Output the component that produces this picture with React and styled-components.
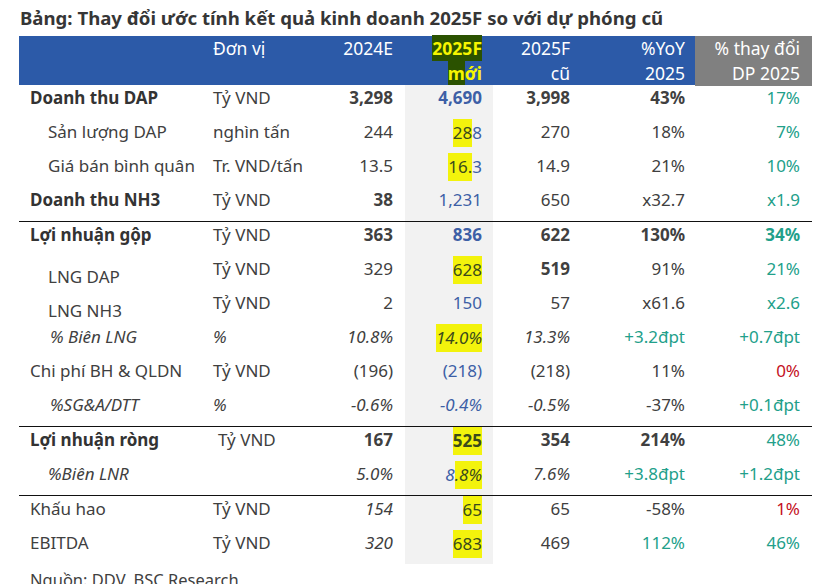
import styled, { createGlobalStyle } from "styled-components";

const GlobalStyle = createGlobalStyle`
    html, body {
        margin: 0;
        padding: 0;
        background: #ffffff;
    }
    body {
        font-family: "Noto Sans", "Open Sans", sans-serif;
        color: #404040;
        overflow: hidden;
    }
`;

const Page = styled.div`
    width: 815px;
    height: 584px;
    padding: 5px 0 0 19px;
    box-sizing: border-box;
`;

const Title = styled.h1`
    margin: 0 0 0 1px;
    font-size: 18.6px;
    line-height: 26px;
    font-weight: 700;
    color: #363636;
    height: 31px;
    white-space: nowrap;
`;

const COLS = "192px 109px 85px 88px 89px 113px 117px";

const HeaderRow = styled.div`
    display: grid;
    grid-template-columns: ${COLS};
    width: 793px;
    height: 49px;
    background: #2c5aa8;
    color: #ffffff;
    font-size: 17.5px;
    line-height: 25px;
`;

const HeadCell = styled.div`
    text-align: ${(p) => (p.$left ? "left" : "right")};
    padding-right: ${(p) => p.$pr ?? 0}px;
    padding-left: ${(p) => p.$pl ?? 0}px;
    background: ${(p) => (p.$gray ? "#808080" : "transparent")};
    white-space: nowrap;
`;

const HeadMark = styled.span`
    background: #2b5200;
    color: #f6f600;
    font-weight: 700;
    padding: 1px 0;
`;

const HeadYellow = styled.span`
    color: #f6f600;
    font-weight: 700;
`;

const Body = styled.div`
    width: 793px;
`;

const Group = styled.div`
    border-top: ${(p) => (p.$first ? "none" : "1px solid #111111")};
`;

const Row = styled.div`
    display: grid;
    grid-template-columns: ${COLS};
    height: 34px;
    font-size: 17px;
    line-height: 26px;
`;

const Cell = styled.div`
    white-space: nowrap;
    text-align: ${(p) => (p.$left ? "left" : "right")};
    padding-left: ${(p) => p.$pl ?? 0}px;
    padding-right: ${(p) => p.$pr ?? 0}px;
    padding-top: ${(p) => p.$down ?? 0}px;
    font-weight: ${(p) => (p.$bold ? 700 : 400)};
    font-style: ${(p) => (p.$italic ? "italic" : "normal")};
    color: ${(p) => p.$color || "#404040"};
    background: ${(p) => (p.$gray ? "#f2f2f2" : "transparent")};
    box-sizing: border-box;
`;

const Mark = styled.span`
    display: inline-block;
    background: #f3f30c;
    color: #3a4a1c;
    padding: 2px 0 3px;
    line-height: 23px;
`;

const Source = styled.div`
    margin: 5px 0 0 11px;
    font-size: 16.5px;
    line-height: 22px;
    color: #404040;
`;

const BLUE = "#3d5fa6";
const GREEN = "#22a08a";
const RED = "#c4101e";

// a value is a string, or { v, b, i, c, mark, before }: mark is the highlighted part
const groups = [
    [
        { label: "Doanh thu DAP", b: true, unit: "Tỷ VND", vals: [{ v: "3,298", b: true }, { v: "4,690", b: true }, { v: "3,998", b: true }, { v: "43%", b: true }, { v: "17%", c: GREEN }] },
        { label: "Sản lượng DAP", indent: 18, unit: "nghìn tấn", vals: ["244", { v: "8", mark: "28", before: true }, "270", "18%", { v: "7%", c: GREEN }] },
        { label: "Giá bán bình quân", indent: 18, unit: "Tr. VND/tấn", vals: ["13.5", { v: "3", mark: "16.", before: true }, "14.9", "21%", { v: "10%", c: GREEN }] },
        { label: "Doanh thu NH3", b: true, unit: "Tỷ VND", vals: [{ v: "38", b: true }, "1,231", "650", "x32.7", { v: "x1.9", c: GREEN }] },
    ],
    [
        { label: "Lợi nhuận gộp", b: true, unit: "Tỷ VND", vals: [{ v: "363", b: true }, { v: "836", b: true }, { v: "622", b: true }, { v: "130%", b: true }, { v: "34%", b: true, c: GREEN }] },
        { label: "LNG DAP", indent: 18, down: 8, unit: "Tỷ VND", vals: ["329", { mark: "628" }, { v: "519", b: true }, "91%", { v: "21%", c: GREEN }] },
        { label: "LNG NH3", indent: 18, down: 8, unit: "Tỷ VND", vals: ["2", "150", "57", "x61.6", { v: "x2.6", c: GREEN }] },
        { label: "% Biên LNG", indent: 20, i: true, unit: "%", vals: [{ v: "10.8%", i: true }, { mark: "14.0%", i: true }, { v: "13.3%", i: true }, { v: "+3.2đpt", c: GREEN }, { v: "+0.7đpt", c: GREEN }] },
        { label: "Chi phí BH & QLDN", unit: "Tỷ VND", vals: ["(196)", "(218)", "(218)", "11%", { v: "0%", c: RED }] },
        { label: "%SG&A/DTT", indent: 20, i: true, unit: "%", vals: [{ v: "-0.6%", i: true }, { v: "-0.4%", i: true }, { v: "-0.5%", i: true }, "-37%", { v: "+0.1đpt", c: GREEN }] },
    ],
    [
        { label: "Lợi nhuận ròng", b: true, unit: "Tỷ VND", unitShift: 5, vals: [{ v: "167", b: true }, { mark: "525", b: true }, { v: "354", b: true }, { v: "214%", b: true }, { v: "48%", c: GREEN }] },
        { label: "%Biên LNR", indent: 18, i: true, unit: "", vals: [{ v: "5.0%", i: true }, { v: "8", mark: ".8%", i: true }, { v: "7.6%", i: true }, { v: "+3.8đpt", c: GREEN }, { v: "+1.2đpt", c: GREEN }] },
    ],
    [
        { label: "Khấu hao", unit: "Tỷ VND", vals: [{ v: "154", i: true }, { mark: "65" }, "65", "-58%", { v: "1%", c: RED }] },
        { label: "EBITDA", unit: "Tỷ VND", vals: [{ v: "320", i: true }, { mark: "683" }, "469", { v: "112%", c: GREEN }, { v: "46%", c: GREEN }] },
    ],
];

const valuePad = [12, 11, 12, 10, 12];

function Value({ val, idx }) {
    const spec = typeof val === "string" ? { v: val } : val;
    const isNew = idx === 1;
    const color = spec.c || (isNew ? BLUE : "#404040");
    let content = spec.v;
    if (spec.mark) {
        if (!spec.v) content = <Mark>{spec.mark}</Mark>;
        else if (spec.before)
            content = (
                <>
                    <Mark>{spec.mark}</Mark>
                    {spec.v}
                </>
            );
        else
            content = (
                <>
                    {spec.v}
                    <Mark>{spec.mark}</Mark>
                </>
            );
    }
    return (
        <Cell
            $pr={valuePad[idx]}
            $bold={spec.b}
            $italic={spec.i}
            $color={color}
            $gray={isNew}
        >
            {content}
        </Cell>
    );
}

export default function App() {
    return (
        <Page>
            <GlobalStyle />
            <Title>Bảng: Thay đổi ước tính kết quả kinh doanh 2025F so với dự phóng cũ</Title>
            <HeaderRow>
                <HeadCell $left />
                <HeadCell $left $pl={2}>Đơn vị</HeadCell>
                <HeadCell $pr={12}>2024E</HeadCell>
                <HeadCell $pr={11}>
                    <HeadMark>2025F</HeadMark>
                    <br />
                    <HeadMark>m</HeadMark>
                    <HeadYellow>ới</HeadYellow>
                </HeadCell>
                <HeadCell $pr={12}>
                    2025F
                    <br />
                    cũ
                </HeadCell>
                <HeadCell $pr={10}>
                    %YoY
                    <br />
                    2025
                </HeadCell>
                <HeadCell $pr={12} $gray>
                    % thay đổi
                    <br />
                    DP 2025
                </HeadCell>
            </HeaderRow>
            <Body>
                {groups.map((rows, gi) => (
                    <Group key={gi} $first={gi === 0}>
                        {rows.map((r) => (
                            <Row key={r.label}>
                                <Cell
                                    $left
                                    $pl={11 + (r.indent || 0)}
                                    $down={r.down}
                                    $bold={r.b}
                                    $italic={r.i}
                                    $color={r.b ? "#333333" : "#404040"}
                                >
                                    {r.label}
                                </Cell>
                                <Cell $left $pl={2 + (r.unitShift || 0)} $italic={r.i}>
                                    {r.unit}
                                </Cell>
                                {r.vals.map((v, i) => (
                                    <Value key={i} val={v} idx={i} />
                                ))}
                            </Row>
                        ))}
                    </Group>
                ))}
            </Body>
            <Source>Nguồn: DDV, BSC Research</Source>
        </Page>
    );
}
